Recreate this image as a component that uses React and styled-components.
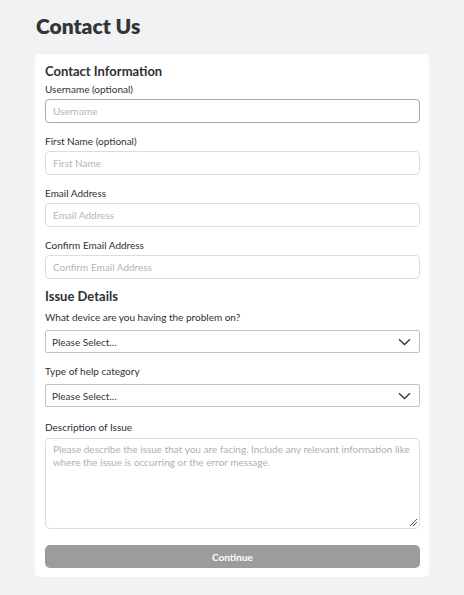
import React from "react";
import styled, { createGlobalStyle } from "styled-components";

const Global = createGlobalStyle`
  html, body { margin: 0; padding: 0; background: #f1f2f4; }
  body { font-family: "Lato", "Open Sans", sans-serif; color: #2f3033; }
  * { box-sizing: border-box; }
`;

const Page = styled.div`
  padding: 13px 35px 18px 35px;
  width: 464px;
`;

const Title = styled.h1`
  margin: 0 0 16px 1px;
  font-size: 21px;
  line-height: 25px;
  font-weight: 800;
  color: #333437;
`;

const Card = styled.form`
  width: 394px;
  background: #fff;
  border-radius: 5px;
  padding: 9px 9px 9px 10px;
  display: flex;
  flex-direction: column;
`;

const SectionTitle = styled.h2`
  margin: 0 0 ${(p) => p.$mb ?? 4}px 0;
  font-size: 13px;
  line-height: 16px;
  font-weight: 700;
  color: #2f3033;
`;

const Field = styled.div`
  display: flex;
  flex-direction: column;
  margin-bottom: ${(p) => p.$mb ?? 12}px;
`;

const Label = styled.label`
  font-size: 10px;
  line-height: 12px;
  color: #2f3033;
  margin-bottom: ${(p) => p.$gap ?? 4}px;
`;

const Input = styled.input`
  height: 24px;
  width: 375px;
  border: 1px solid ${(p) => (p.$focus ? "#a8a8a8" : "#dcdcdc")};
  border-radius: 4px;
  padding: 0 7px;
  font-family: inherit;
  font-size: 10px;
  color: #333;
  outline: none;
  &::placeholder { color: #b4b4b4; }
`;

const SelectBox = styled.div`
  height: 23px;
  width: 375px;
  border: 1px solid #c2c2c2;
  border-radius: 2px;
  display: flex;
  align-items: center;
  justify-content: space-between;
  padding: 0 8px 0 6px;
  font-size: 10px;
  color: #333;
`;

const TextArea = styled.div`
  position: relative;
  height: 91px;
  width: 375px;
  border: 1px solid #dcdcdc;
  border-radius: 5px;
  padding: 4px 7px;
  font-size: 10px;
  line-height: 13px;
  color: #b0b0b0;
`;

const Grip = styled.svg`
  position: absolute;
  right: 1px;
  bottom: 1px;
`;

const Button = styled.button`
  margin-top: 16px;
  height: 23px;
  width: 375px;
  border: none;
  border-radius: 5px;
  background: #9b9c9d;
  color: #fff;
  font-family: inherit;
  font-weight: 700;
  font-size: 10px;
`;

const Chevron = () => (
  <svg width="13" height="8" viewBox="0 0 13 8" fill="none">
    <path d="M1 1.2 L6.5 6.5 L12 1.2" stroke="#333" strokeWidth="1.3" />
  </svg>
);

export default function App() {
  return (
    <Page>
      <Global />
      <Title>Contact Us</Title>
      <Card>
        <SectionTitle>Contact Information</SectionTitle>
        <Field>
          <Label>Username (optional)</Label>
          <Input $focus placeholder="Username" />
        </Field>
        <Field>
          <Label>First Name (optional)</Label>
          <Input placeholder="First Name" />
        </Field>
        <Field>
          <Label>Email Address</Label>
          <Input placeholder="Email Address" />
        </Field>
        <Field $mb={9}>
          <Label>Confirm Email Address</Label>
          <Input placeholder="Confirm Email Address" />
        </Field>
        <SectionTitle $mb={7}>Issue Details</SectionTitle>
        <Field $mb={12}>
          <Label $gap={7}>What device are you having the problem on?</Label>
          <SelectBox>
            Please Select...
            <Chevron />
          </SelectBox>
        </Field>
        <Field $mb={14}>
          <Label $gap={7}>Type of help category</Label>
          <SelectBox>
            Please Select...
            <Chevron />
          </SelectBox>
        </Field>
        <Field $mb={0}>
          <Label $gap={5}>Description of Issue</Label>
          <TextArea>
            Please describe the issue that you are facing. Include any relevant information like
            where the issue is occurring or the error message.
            <Grip width="10" height="10" viewBox="0 0 10 10">
              <path d="M2 9 L9 2 M5 9 L9 5" stroke="#555" strokeWidth="1" />
            </Grip>
          </TextArea>
        </Field>
        <Button type="button">Continue</Button>
      </Card>
    </Page>
  );
}
